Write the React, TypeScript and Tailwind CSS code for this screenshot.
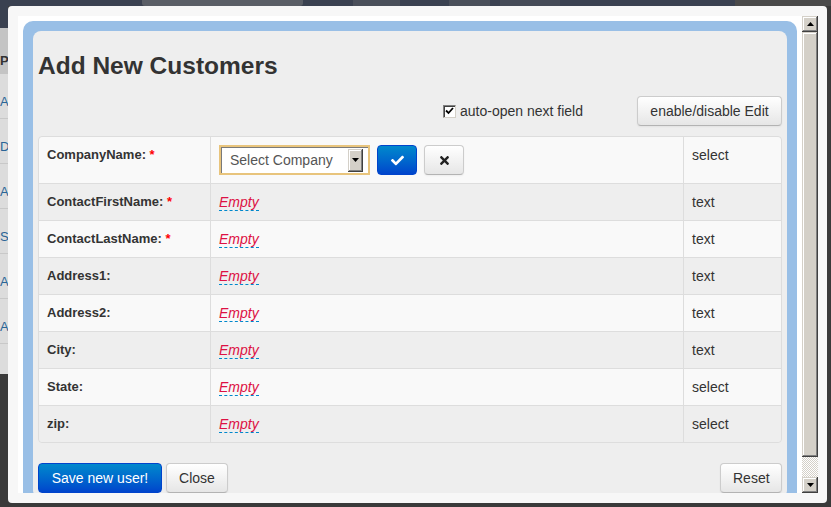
import React from "react";
import { FaCheck, FaTimes } from "react-icons/fa";

interface Field {
  label: string;
  required?: boolean;
  type: "select" | "text";
  editing?: boolean;
}

const fields: Field[] = [
  { label: "CompanyName:", required: true, type: "select", editing: true },
  { label: "ContactFirstName:", required: true, type: "text" },
  { label: "ContactLastName:", required: true, type: "text" },
  { label: "Address1:", type: "text" },
  { label: "Address2:", type: "text" },
  { label: "City:", type: "text" },
  { label: "State:", type: "select" },
  { label: "zip:", type: "select" },
];

const bevel =
  "bg-[#d4d0c8] shadow-[inset_-1px_-1px_#404040,inset_1px_1px_#d4d0c8,inset_-2px_-2px_#808080,inset_2px_2px_#ffffff]";

const btn =
  "h-[30px] px-3 rounded border border-[#ccc] border-b-[#b3b3b3] bg-gradient-to-b from-white to-[#e6e6e6] text-[14px] leading-5 text-[#333] shadow-[inset_0_1px_0_rgba(255,255,255,0.2),0_1px_2px_rgba(0,0,0,0.05)]";

const btnPrimary =
  "h-[30px] px-3 rounded border border-[#0044cc] bg-gradient-to-b from-[#0088cc] to-[#0044cc] text-[14px] leading-5 text-white";

// barra de desplazamiento clásica dibujada a mano
const ScrollBar: React.FC = () => (
  <div className="w-4 flex flex-col">
    <div className={`h-4 flex items-center justify-center ${bevel}`}>
      <svg width="7" height="4" viewBox="0 0 7 4">
        <path d="M3.5 0 L7 4 L0 4 Z" fill="#000" />
      </svg>
    </div>
    <div className={`h-[425px] ${bevel}`} />
    <div className="flex-1 bg-[repeating-conic-gradient(#d4d0c8_0_25%,#ffffff_0_50%)] bg-[length:2px_2px]" />
    <div className={`h-4 flex items-center justify-center ${bevel}`}>
      <svg width="7" height="4" viewBox="0 0 7 4">
        <path d="M0 0 L7 0 L3.5 4 Z" fill="#000" />
      </svg>
    </div>
  </div>
);

const CompanySelect: React.FC = () => (
  <div className="flex items-center gap-[7px]">
    <div className="w-[151px] h-[30px] border-2 border-[#e8c47c] bg-white flex items-center justify-between pl-[9px] pr-[5px] shadow-[inset_1px_1px_#7a7a7a]">
      <span className="text-[14px] text-[#555]">Select Company</span>
      <div className={`w-[15px] h-[23px] flex items-center justify-center ${bevel}`}>
        <svg width="7" height="4" viewBox="0 0 7 4">
          <path d="M0 0 L7 0 L3.5 4 Z" fill="#000" />
        </svg>
      </div>
    </div>
    <button className={`${btnPrimary} w-10 flex items-center justify-center`}>
      <FaCheck size={13} color="#fff" />
    </button>
    <button className={`${btn} w-10 flex items-center justify-center`}>
      <FaTimes size={13} color="#222" />
    </button>
  </div>
);

const App: React.FC = () => {
  return (
    <div className="w-[831px] h-[507px] bg-[#3a3a3a] flex flex-col overflow-hidden font-[Liberation_Sans,Arial,sans-serif]">
      {/* página atenuada detrás del diálogo */}
      <div className="h-[6px] bg-[#3a4150] shrink-0 flex">
        <div className="ml-[142px] w-[161px] bg-[#5a5e66] rounded-b-[3px]" />
        <div className="ml-[50px] w-[47px] bg-[#4a4f5a]" />
        <div className="ml-[49px] w-[41px] bg-[#4a4f5a]" />
        <div className="ml-[10px] w-[60px] bg-[#454b57]" />
        <div className="ml-[175px] flex-1 bg-[#4a4a4a]" />
      </div>
      <div className="flex flex-1">
        <div className="w-2 h-[497px] flex flex-col overflow-hidden text-[13px] leading-none">
          <div className="h-[22px] bg-[#3a4150]" />
          <div className="h-[46px] bg-[#c4c4c4] pt-[26px] font-bold text-[#333]">P</div>
          <div className="h-[300px] bg-[#dcdcdc] flex flex-col text-[#2a6496]">
            {["A", "D", "A", "S", "A", "A"].map((c, i) => (
              <div key={i} className="h-[45px] border-b border-[#c8c8c8] pt-[21px]">
                {c}
              </div>
            ))}
          </div>
          <div className="flex-1 bg-[#3a3a3a]" />
        </div>

        {/* Diálogo */}
        <div className="w-[819px] h-[497px] bg-[#f7f7f7] rounded-[4px] pt-[10px] pl-[10px] pr-[9px] pb-[10px]">
          <div className="w-[800px] h-[477px] bg-white flex">
            <div className="w-[784px] h-[477px] overflow-hidden p-[5px]">
              <div className="bg-[#99bfe6] rounded-t-[10px] p-[10px]">
                <div className="bg-[#eeeeee] rounded-[8px] p-[5px] text-[#333]">
                  <h3 className="my-[10px] text-[24.5px] leading-[40px] font-bold">Add New Customers</h3>

                  <div className="flex items-center justify-end mb-[10px]">
                    <label className="flex items-center gap-[4px] mr-[54px] text-[14px] leading-5">
                      <span className="w-[13px] h-[13px] bg-white border border-[#808080] border-r-[#d4d0c8] border-b-[#d4d0c8] shadow-[inset_1px_1px_#404040] flex items-center justify-center">
                        <svg width="9" height="8" viewBox="0 0 9 8">
                          <path d="M1 3.5 L3.5 6 L8 1" stroke="#000" strokeWidth="1.8" fill="none" />
                        </svg>
                      </span>
                      auto-open next field
                    </label>
                    <button className={`${btn} w-[145px]`}>enable/disable Edit</button>
                  </div>

                  <table className="w-full table-fixed border-separate border-spacing-0 border border-[#ddd] rounded-[4px] text-[14px] leading-5">
                    <colgroup>
                      <col className="w-[171px]" />
                      <col className="w-[473px]" />
                      <col className="w-[98px]" />
                    </colgroup>
                    <tbody>
                      {fields.map((f, i) => {
                        const first = i === 0;
                        const last = i === fields.length - 1;
                        const rowBg = i % 2 === 0 ? "bg-[#f9f9f9]" : "bg-[#eeeeee]";
                        const top = first ? "" : "border-t border-[#ddd]";
                        return (
                          <tr key={f.label} className="align-top">
                            <td
                              className={`${rowBg} ${top} p-2 text-[13px] font-bold ${first ? "rounded-tl-[4px]" : ""} ${last ? "rounded-bl-[4px]" : ""}`}
                            >
                              {f.label}
                              {f.required && <span className="text-[#ff0000]"> *</span>}
                            </td>
                            <td className={`${rowBg} ${top} border-l border-[#ddd] p-2`}>
                              {f.editing ? (
                                <CompanySelect />
                              ) : (
                                <a className="italic text-[#dd1144] border-b border-dashed border-[#0088cc]">Empty</a>
                              )}
                            </td>
                            <td
                              className={`${rowBg} ${top} border-l border-[#ddd] p-2 ${first ? "rounded-tr-[4px]" : ""} ${last ? "rounded-br-[4px]" : ""}`}
                            >
                              {f.type}
                            </td>
                          </tr>
                        );
                      })}
                    </tbody>
                  </table>

                  <div className="flex items-center justify-between mt-5">
                    <div className="flex gap-1">
                      <button className={`${btnPrimary} w-[124px]`}>Save new user!</button>
                      <button className={`${btn} w-[62px]`}>Close</button>
                    </div>
                    <button className={`${btn} w-[62px]`}>Reset</button>
                  </div>
                </div>
              </div>
            </div>
            <ScrollBar />
          </div>
        </div>

        <div className="flex-1" />
      </div>
    </div>
  );
};

export default App;
